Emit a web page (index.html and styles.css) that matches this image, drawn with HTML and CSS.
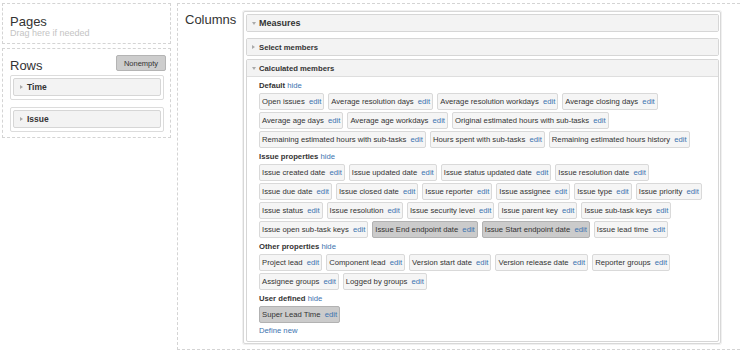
FILE: index.html
```html
<!DOCTYPE html>
<html lang="en">
<head>
    <meta charset="UTF-8">
    <title>Report layout</title>
    <link rel="stylesheet" href="styles.css">
</head>
<body>
    <div class="layout">
        <div class="side">
            <div class="drop pages">
                <div class="drop-title">Pages</div>
                <div class="drop-hint">Drag here if needed</div>
            </div>
            <div class="drop rows">
                <div class="drop-head">
                    <div class="drop-title">Rows</div>
                    <button class="btn-nonempty">Nonempty</button>
                </div>
                <div class="dim">
                    <div class="dim-bar"><span class="tri tri-right"></span>Time</div>
                </div>
                <div class="dim">
                    <div class="dim-bar"><span class="tri tri-right"></span>Issue</div>
                </div>
            </div>
        </div>

        <div class="drop columns">
            <div class="drop-title col-title">Columns</div>
            <div class="dim-panel">
                <div class="section measures">
                    <div class="section-bar"><span class="tri tri-down"></span>Measures</div>
                </div>
                <div class="section select">
                    <div class="section-bar"><span class="tri tri-right"></span>Select members</div>
                </div>
                <div class="section calc">
                    <div class="section-bar open"><span class="tri tri-down"></span>Calculated members</div>
                    <div class="section-body">
                        <div class="group">
                            <div class="group-label">Default <a href="#">hide</a></div>
                            <div class="chips">
                                <span class="chip">Open issues <a href="#">edit</a></span>
                                <span class="chip">Average resolution days <a href="#">edit</a></span>
                                <span class="chip">Average resolution workdays <a href="#">edit</a></span>
                                <span class="chip">Average closing days <a href="#">edit</a></span>
                                <span class="chip">Average age days <a href="#">edit</a></span>
                                <span class="chip">Average age workdays <a href="#">edit</a></span>
                                <span class="chip">Original estimated hours with sub-tasks <a href="#">edit</a></span>
                                <span class="chip">Remaining estimated hours with sub-tasks <a href="#">edit</a></span>
                                <span class="chip">Hours spent with sub-tasks <a href="#">edit</a></span>
                                <span class="chip">Remaining estimated hours history <a href="#">edit</a></span>
                            </div>
                        </div>
                        <div class="group">
                            <div class="group-label">Issue properties <a href="#">hide</a></div>
                            <div class="chips">
                                <span class="chip">Issue created date <a href="#">edit</a></span>
                                <span class="chip">Issue updated date <a href="#">edit</a></span>
                                <span class="chip">Issue status updated date <a href="#">edit</a></span>
                                <span class="chip">Issue resolution date <a href="#">edit</a></span>
                                <span class="chip">Issue due date <a href="#">edit</a></span>
                                <span class="chip">Issue closed date <a href="#">edit</a></span>
                                <span class="chip">Issue reporter <a href="#">edit</a></span>
                                <span class="chip">Issue assignee <a href="#">edit</a></span>
                                <span class="chip">Issue type <a href="#">edit</a></span>
                                <span class="chip">Issue priority <a href="#">edit</a></span>
                                <span class="chip">Issue status <a href="#">edit</a></span>
                                <span class="chip">Issue resolution <a href="#">edit</a></span>
                                <span class="chip">Issue security level <a href="#">edit</a></span>
                                <span class="chip">Issue parent key <a href="#">edit</a></span>
                                <span class="chip">Issue sub-task keys <a href="#">edit</a></span>
                                <span class="chip">Issue open sub-task keys <a href="#">edit</a></span>
                                <span class="chip selected">Issue End endpoint date <a href="#">edit</a></span>
                                <span class="chip selected">Issue Start endpoint date <a href="#">edit</a></span>
                                <span class="chip">Issue lead time <a href="#">edit</a></span>
                            </div>
                        </div>
                        <div class="group">
                            <div class="group-label">Other properties <a href="#">hide</a></div>
                            <div class="chips">
                                <span class="chip">Project lead <a href="#">edit</a></span>
                                <span class="chip">Component lead <a href="#">edit</a></span>
                                <span class="chip">Version start date <a href="#">edit</a></span>
                                <span class="chip">Version release date <a href="#">edit</a></span>
                                <span class="chip">Reporter groups <a href="#">edit</a></span>
                                <span class="chip">Assignee groups <a href="#">edit</a></span>
                                <span class="chip">Logged by groups <a href="#">edit</a></span>
                            </div>
                        </div>
                        <div class="group">
                            <div class="group-label">User defined <a href="#">hide</a></div>
                            <div class="chips">
                                <span class="chip selected">Super Lead Time <a href="#">edit</a></span>
                            </div>
                        </div>
                        <a class="define-new" href="#">Define new</a>
                    </div>
                </div>
            </div>
        </div>
    </div>
</body>
</html>
```

FILE: styles.css
```css
body {
    margin: 0;
    font-family: "Liberation Sans", Arial, sans-serif;
    color: #333;
    background: #fff;
}
a {
    color: #3b73af;
    text-decoration: none;
}
.layout {
    display: flex;
    align-items: flex-start;
    padding: 3px 0 0 2px;
    gap: 6px;
}
.side {
    width: 169px;
    display: flex;
    flex-direction: column;
    gap: 4px;
}
.drop {
    border: 1px dashed #d4d4d4;
    box-sizing: border-box;
}
.drop-title {
    font-size: 13px;
    line-height: 15px;
    color: #333;
}
.pages {
    padding: 10px 6px 5px 7px;
}
.drop-hint {
    font-size: 9px;
    line-height: 9px;
    color: #c4c4c4;
}
.rows {
    padding: 6px 6px 5px 7px;
}
.drop-head {
    display: flex;
    justify-content: space-between;
    align-items: flex-start;
    height: 20px;
}
.drop-head .drop-title {
    margin-top: 3px;
}
.btn-nonempty {
    height: 16px;
    width: 50px;
    margin-right: -2px;
    padding: 0;
    font-family: inherit;
    font-size: 7.5px;
    color: #333;
    background: #cdcdcd;
    border: 1px solid #b4b4b4;
    border-radius: 2px;
}
.dim {
    border: 1px solid #dcdcdc;
    border-radius: 2px;
    padding: 2px 2px 3px;
    margin-bottom: 7px;
}
.dim:last-child {
    margin-bottom: 0;
}
.dim-bar {
    height: 18px;
    box-sizing: border-box;
    border: 1px solid #d6d6d6;
    border-radius: 2px;
    background: #f3f3f3;
    display: flex;
    align-items: center;
    padding-left: 6px;
    font-size: 8.5px;
    font-weight: bold;
}
.tri {
    display: inline-block;
    width: 0;
    height: 0;
    margin-right: 4px;
}
.tri-right {
    border-top: 2.5px solid transparent;
    border-bottom: 2.5px solid transparent;
    border-left: 3px solid #aaa;
}
.tri-down {
    border-left: 2.5px solid transparent;
    border-right: 2.5px solid transparent;
    border-top: 3px solid #aaa;
    margin-right: 3px;
}

.columns {
    flex: 1;
    display: flex;
    align-items: flex-start;
    border-right: none;
    padding: 7px 0 5px 7px;
}
.col-title {
    width: 58px;
    margin-top: 1px;
}
.dim-panel {
    width: 478px;
    box-sizing: border-box;
    border: 1px solid #d8d8d8;
    border-radius: 2px;
    box-shadow: 0 0 0 1px #f0f0f0;
    padding: 2px 1px 1px 2px;
}
.section {
    border: 1px solid #d6d6d6;
    border-radius: 2px;
    margin-bottom: 3px;
}
.section.measures {
    margin-bottom: 6px;
}
.section.calc {
    margin-bottom: 0;
}
.section-bar {
    height: 16px;
    background: #f3f3f3;
    display: flex;
    align-items: center;
    padding-left: 5px;
    font-size: 7.7px;
    font-weight: bold;
    color: #333;
}
.measures .section-bar {
    font-size: 9px;
}
.section-bar.open {
    border-bottom: 1px solid #dedede;
}
.section-body {
    padding: 4px 12px 5px 12px;
}
.group {
    margin-bottom: 4px;
}
.group-label {
    font-size: 7.7px;
    line-height: 10px;
    font-weight: bold;
    margin-bottom: 2px;
}
.group-label a {
    font-weight: normal;
}
.chips {
    display: flex;
    flex-wrap: wrap;
    gap: 2px 4px;
}
.chip {
    height: 17px;
    box-sizing: border-box;
    border: 1px solid #d9d9d9;
    border-radius: 2px;
    background: #f5f5f5;
    padding: 0 2px;
    font-size: 7.7px;
    line-height: 15px;
    white-space: nowrap;
    color: #333;
}
.chip a {
    margin-left: 2px;
}
.chip.selected {
    background: #cbcbcb;
    border-color: #b2b2b2;
}
.define-new {
    display: block;
    margin-top: -1px;
    font-size: 7.7px;
    line-height: 10px;
}
```
